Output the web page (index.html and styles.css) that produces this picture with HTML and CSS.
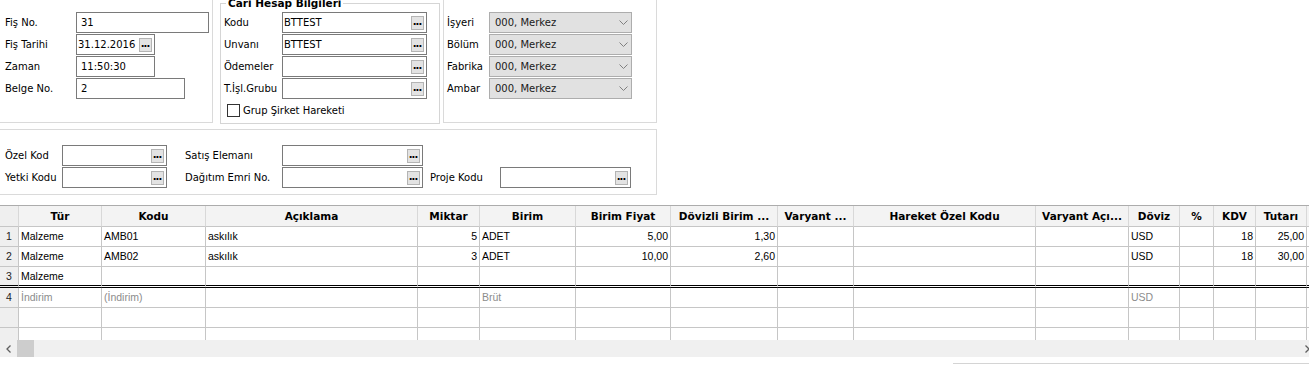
FILE: index.html
```html
<!DOCTYPE html>
<html lang="tr">

<head>
    <meta charset="UTF-8">
    <title>Fiş</title>
    <link rel="stylesheet" href="styles.css">
</head>

<body>
    <div class="top">
        <div class="panel fis">
            <div class="row">
                <span class="lbl">Fiş No.</span>
                <div class="field w-fisno">31</div>
            </div>
            <div class="row">
                <span class="lbl">Fiş Tarihi</span>
                <div class="field lookup w-date"><span class="val">31.12.2016</span><span class="dots">...</span></div>
            </div>
            <div class="row">
                <span class="lbl">Zaman</span>
                <div class="field w-date">11:50:30</div>
            </div>
            <div class="row">
                <span class="lbl">Belge No.</span>
                <div class="field w-belge">2</div>
            </div>
        </div>

        <fieldset class="cari">
            <legend>Cari Hesap Bilgileri</legend>
            <div class="row">
                <span class="lbl">Kodu</span>
                <div class="field lookup w-cari"><span class="val">BTTEST</span><span class="dots">...</span></div>
            </div>
            <div class="row">
                <span class="lbl">Unvanı</span>
                <div class="field lookup w-cari"><span class="val">BTTEST</span><span class="dots">...</span></div>
            </div>
            <div class="row">
                <span class="lbl">Ödemeler</span>
                <div class="field lookup w-cari"><span class="val"></span><span class="dots">...</span></div>
            </div>
            <div class="row">
                <span class="lbl">T.İşl.Grubu</span>
                <div class="field lookup w-cari"><span class="val"></span><span class="dots">...</span></div>
            </div>
            <label class="check"><span class="box"></span>Grup Şirket Hareketi</label>
        </fieldset>

        <div class="panel org">
            <div class="row">
                <span class="lbl">İşyeri</span>
                <div class="combo"><span>000, Merkez</span><svg width="9" height="5" viewBox="0 0 9 5"><polyline points="0.5,0.5 4.5,4.5 8.5,0.5" /></svg></div>
            </div>
            <div class="row">
                <span class="lbl">Bölüm</span>
                <div class="combo"><span>000, Merkez</span><svg width="9" height="5" viewBox="0 0 9 5"><polyline points="0.5,0.5 4.5,4.5 8.5,0.5" /></svg></div>
            </div>
            <div class="row">
                <span class="lbl">Fabrika</span>
                <div class="combo"><span>000, Merkez</span><svg width="9" height="5" viewBox="0 0 9 5"><polyline points="0.5,0.5 4.5,4.5 8.5,0.5" /></svg></div>
            </div>
            <div class="row">
                <span class="lbl">Ambar</span>
                <div class="combo"><span>000, Merkez</span><svg width="9" height="5" viewBox="0 0 9 5"><polyline points="0.5,0.5 4.5,4.5 8.5,0.5" /></svg></div>
            </div>
        </div>
    </div>

    <div class="filters">
        <div class="row">
            <span class="lbl l-ozel">Özel Kod</span>
            <div class="field lookup w-ozel"><span class="val"></span><span class="dots">...</span></div>
            <span class="lbl l-satis">Satış Elemanı</span>
            <div class="field lookup w-satis"><span class="val"></span><span class="dots">...</span></div>
        </div>
        <div class="row">
            <span class="lbl l-ozel">Yetki Kodu</span>
            <div class="field lookup w-ozel"><span class="val"></span><span class="dots">...</span></div>
            <span class="lbl l-satis">Dağıtım Emri No.</span>
            <div class="field lookup w-satis"><span class="val"></span><span class="dots">...</span></div>
            <span class="lbl l-proje">Proje Kodu</span>
            <div class="field lookup w-proje"><span class="val"></span><span class="dots">...</span></div>
        </div>
    </div>

    <div class="grid">
        <div class="grid-view">
            <table>
                <colgroup>
                    <col style="width: 19px">
                    <col style="width: 83px">
                    <col style="width: 104px">
                    <col style="width: 212px">
                    <col style="width: 62px">
                    <col style="width: 96px">
                    <col style="width: 95px">
                    <col style="width: 107px">
                    <col style="width: 76px">
                    <col style="width: 182px">
                    <col style="width: 93px">
                    <col style="width: 51px">
                    <col style="width: 34px">
                    <col style="width: 42px">
                    <col style="width: 51px">
                    <col style="width: 70px">
                </colgroup>
                <thead>
                    <tr>
                        <th class="rn"></th>
                        <th>Tür</th>
                        <th>Kodu</th>
                        <th>Açıklama</th>
                        <th>Miktar</th>
                        <th>Birim</th>
                        <th>Birim Fiyat</th>
                        <th>Dövizli Birim ...</th>
                        <th>Varyant ...</th>
                        <th>Hareket Özel Kodu</th>
                        <th>Varyant Açı...</th>
                        <th>Döviz</th>
                        <th>%</th>
                        <th>KDV</th>
                        <th>Tutarı</th>
                        <th></th>
                    </tr>
                </thead>
                <tbody>
                    <tr>
                        <td class="rn">1</td>
                        <td>Malzeme</td>
                        <td>AMB01</td>
                        <td>askılık</td>
                        <td class="num">5</td>
                        <td>ADET</td>
                        <td class="num">5,00</td>
                        <td class="num">1,30</td>
                        <td></td>
                        <td></td>
                        <td></td>
                        <td>USD</td>
                        <td></td>
                        <td class="num">18</td>
                        <td class="num">25,00</td>
                        <td></td>
                    </tr>
                    <tr>
                        <td class="rn">2</td>
                        <td>Malzeme</td>
                        <td>AMB02</td>
                        <td>askılık</td>
                        <td class="num">3</td>
                        <td>ADET</td>
                        <td class="num">10,00</td>
                        <td class="num">2,60</td>
                        <td></td>
                        <td></td>
                        <td></td>
                        <td>USD</td>
                        <td></td>
                        <td class="num">18</td>
                        <td class="num">30,00</td>
                        <td></td>
                    </tr>
                    <tr class="sep">
                        <td class="rn">3</td>
                        <td>Malzeme</td>
                        <td></td><td></td><td></td><td></td><td></td><td></td>
                        <td></td><td></td><td></td><td></td><td></td><td></td><td></td><td></td>
                    </tr>
                    <tr class="muted">
                        <td class="rn">4</td>
                        <td>İndirim</td>
                        <td>(İndirim)</td>
                        <td></td>
                        <td></td>
                        <td>Brüt</td>
                        <td></td><td></td><td></td><td></td><td></td>
                        <td>USD</td>
                        <td></td><td></td><td></td><td></td>
                    </tr>
                    <tr>
                        <td class="rn"></td>
                        <td></td><td></td><td></td><td></td><td></td><td></td><td></td><td></td>
                        <td></td><td></td><td></td><td></td><td></td><td></td><td></td>
                    </tr>
                    <tr>
                        <td class="rn"></td>
                        <td></td><td></td><td></td><td></td><td></td><td></td><td></td><td></td>
                        <td></td><td></td><td></td><td></td><td></td><td></td><td></td>
                    </tr>
                </tbody>
            </table>
        </div>

        <div class="hscroll">
            <span class="arrow"><svg width="5" height="8" viewBox="0 0 5 8"><polyline points="4.5,0.5 1,4 4.5,7.5" /></svg></span>
            <span class="thumb"></span>
            <span class="track"></span>
            <span class="arrow"><svg width="5" height="8" viewBox="0 0 5 8"><polyline points="0.5,0.5 4,4 0.5,7.5" /></svg></span>
        </div>
    </div>

    <div class="bottom-line"></div>
</body>

</html>
```

FILE: styles.css
```css
* {
    margin: 0;
    padding: 0;
    box-sizing: border-box;
}

html,
body {
    overflow: hidden;
}

body {
    width: 1309px;
    height: 365px;
    background: #fff;
    color: #000;
    font-family: "DejaVu Sans", sans-serif;
    font-size: 10px;
}

/* top area: three panels side by side */
.top {
    display: flex;
    align-items: flex-start;
    height: 123px;
}

.panel {
    height: 123px;
    border-bottom: 1px solid #dadada;
    border-right: 1px solid #dadada;
    padding-top: 12px;
}

.fis {
    width: 213px;
    padding-left: 5px;
}

.fis .lbl {
    width: 71px;
}

.row {
    display: flex;
    align-items: center;
    height: 21px;
    margin-bottom: 1px;
}

.lbl {
    flex: none;
    white-space: nowrap;
}

.field {
    flex: none;
    display: flex;
    align-items: center;
    height: 21px;
    padding-left: 4px;
    border: 1px solid #7a7a7a;
    background: #fff;
    white-space: nowrap;
}

.field.lookup {
    padding-left: 1px;
    padding-right: 2px;
}

.field .val {
    flex: 1;
}

.dots {
    flex: none;
    width: 13px;
    height: 14px;
    background: #e3e3e3;
    border: 1px solid #b4b4b4;
    font-size: 10px;
    font-weight: bold;
    line-height: 9px;
    text-align: center;
    letter-spacing: -1px;
    text-indent: -1px;
    color: #000;
}

.w-fisno { width: 133px; }
.w-date { width: 79px; }
.w-belge { width: 109px; }
.w-cari { width: 145px; }
.w-ozel { width: 105px; }
.w-satis { width: 141px; }
.w-proje { width: 131px; }

/* Cari Hesap Bilgileri group box */
.cari {
    flex: none;
    width: 220px;
    height: 127px;
    margin: -3px 0 0 7px;
    padding: 2px 0 0 3px;
    border: 1px solid #d5d5d5;
    min-width: 0;
}

.cari legend {
    margin-left: 2px;
    padding: 0 2px;
    font-size: 10.5px;
    font-weight: bold;
    line-height: 13px;
}

.cari .lbl {
    width: 58px;
}

.check {
    display: flex;
    align-items: center;
    margin: 5px 0 0 3px;
    height: 13px;
}

.check .box {
    width: 13px;
    height: 13px;
    margin-right: 3px;
    border: 1px solid #333;
    background: #fff;
}

.org {
    flex: none;
    width: 214px;
    margin-left: 3px;
    padding-left: 3px;
    border-left: 1px solid #dadada;
}

.org .lbl {
    width: 42px;
}

.combo {
    flex: none;
    display: flex;
    align-items: center;
    justify-content: space-between;
    width: 143px;
    height: 21px;
    padding: 0 3px 0 5px;
    border: 1px solid #adadad;
    background: #e1e1e1;
    color: #1a1a1a;
}

.combo svg polyline {
    fill: none;
    stroke: #808080;
    stroke-width: 1;
}

/* second panel with codes */
.filters {
    width: 657px;
    height: 66px;
    margin-top: 6px;
    padding: 15px 0 0 5px;
    border: 1px solid #dadada;
    border-left: none;
}

.l-ozel { width: 57px; }
.l-satis { width: 97px; margin-left: 18px; }
.l-proje { width: 70px; margin-left: 7px; }

/* data grid */
.grid {
    margin-top: 10px;
}

.grid-view {
    height: 135px;
    overflow: hidden;
    border-top: 1px solid #acacac;
}

.grid table {
    table-layout: fixed;
    width: 1377px;
    border-collapse: separate;
    border-spacing: 0;
}

.grid th,
.grid td {
    border-right: 1px solid #c6c6c6;
    border-bottom: 1px solid #c6c6c6;
    white-space: nowrap;
    overflow: hidden;
}

.grid th {
    height: 21px;
    line-height: 20px;
    background: #f3f3f3;
    border-right-color: #d8d8d8;
    font-family: "DejaVu Sans", sans-serif;
    font-size: 10.5px;
    font-weight: bold;
    text-align: center;
}

.grid td {
    height: 20px;
    line-height: 19px;
    padding: 0 2px;
    font-family: "Liberation Sans", sans-serif;
    font-size: 10.5px;
}

.grid .rn {
    background: #efefef;
    text-align: center;
    color: #222;
    padding: 0;
}

.grid td.num {
    text-align: right;
}

.grid tr.sep td {
    height: 21px;
    line-height: 18px;
    border-bottom: 3px double #000;
}

.grid tr.muted td {
    color: #8c8c8c;
}

.grid tr.muted td.rn {
    color: #222;
}

.hscroll {
    display: flex;
    width: 1316px;
    height: 17px;
    background: #f0f0f0;
}

.hscroll .arrow {
    display: flex;
    align-items: center;
    justify-content: center;
    width: 17px;
}

.hscroll .arrow polyline {
    fill: none;
    stroke: #606060;
    stroke-width: 1.3;
}

.hscroll .thumb {
    width: 17px;
    background: #cdcdcd;
}

.hscroll .track {
    flex: 1;
}

.bottom-line {
    margin: 6px 0 0 953px;
    border-top: 1px solid #d4d4d4;
}
```
